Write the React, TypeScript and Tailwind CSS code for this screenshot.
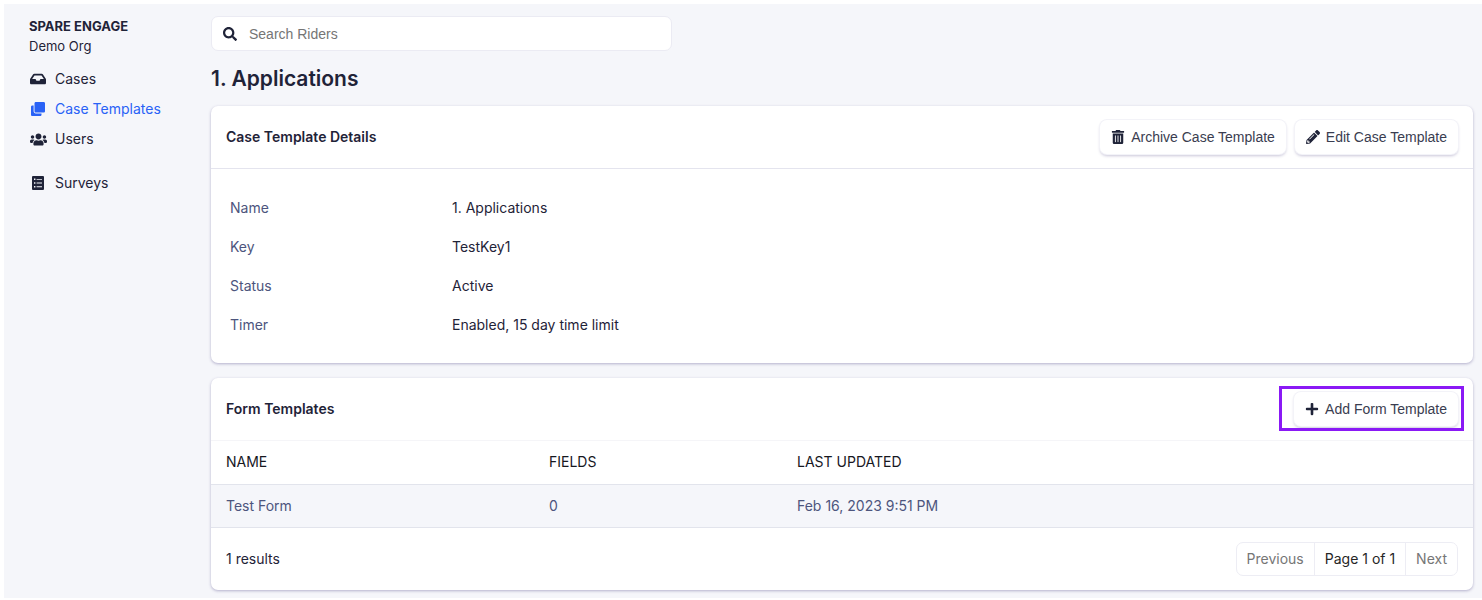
import type { ReactNode } from "react";
import {
  FaClone,
  FaInbox,
  FaPencilAlt,
  FaPlus,
  FaSearch,
  FaTrashAlt,
  FaUsers,
} from "react-icons/fa";

function SurveyIcon() {
  return (
    <svg viewBox="0 0 12 14" className="h-[14px] w-3" fill="currentColor" aria-hidden="true">
      <path
        fillRule="evenodd"
        d="M1 0h10a1 1 0 0 1 1 1v12a1 1 0 0 1-1 1H1a1 1 0 0 1-1-1V1a1 1 0 0 1 1-1ZM2 2.6v1.4h1.4V2.6ZM4.6 2.9v.9h5.4v-.9ZM2 6.3v1.4h1.4V6.3ZM4.6 6.6v.9h5.4v-.9ZM2 10v1.4h1.4V10ZM4.6 10.3v.9h5.4v-.9Z"
      />
    </svg>
  );
}

function NavItem({ icon, label, active = false }: { icon: ReactNode; label: string; active?: boolean }) {
  return (
    <li>
      <a
        href="#"
        aria-current={active ? "page" : undefined}
        className={
          active
            ? "flex h-[30px] items-center gap-2 text-[#2962f6]"
            : "flex h-[30px] items-center gap-2 text-[#1f2338]"
        }
      >
        <span className="flex w-[18px] justify-center">{icon}</span>
        {label}
      </a>
    </li>
  );
}

function ActionButton({ icon, children }: { icon: ReactNode; children: ReactNode }) {
  return (
    <button
      type="button"
      className="flex h-[34px] items-center gap-[6px] rounded-[7px] bg-white px-[11px] font-['Liberation_Sans',sans-serif] text-[14px] text-[#3a3d50] shadow-[0_0_0_1px_#f3f3f8,0_2px_3px_rgba(60,50,120,0.28)]"
    >
      <span className="flex w-[14px] justify-center text-[#1f2338]">{icon}</span>
      {children}
    </button>
  );
}

function Card({ title, actions, divider, children }: { title: string; actions: ReactNode; divider: string; children: ReactNode }) {
  return (
    <section className="overflow-hidden rounded-[7px] bg-white shadow-[0_1px_3px_rgba(70,60,130,0.38)]">
      <header className={`flex h-[63px] items-center justify-between border-b px-[15px] ${divider}`}>
        <h2 className="font-semibold">{title}</h2>
        <div className="flex gap-[9px]">{actions}</div>
      </header>
      {children}
    </section>
  );
}

const details = [
  ["Name", "1. Applications"],
  ["Key", "TestKey1"],
  ["Status", "Active"],
  ["Timer", "Enabled, 15 day time limit"],
];

export default function App() {
  return (
    <div className="min-h-screen bg-white pt-1 pl-1 pb-[2px] font-['Inter',sans-serif] text-[14px] leading-5 text-[#1f2338]">
      <div className="flex min-h-[calc(100vh-6px)] bg-[#f5f6fa] pr-[9px]">
        <aside className="w-[207px] shrink-0 pt-3 pl-[25px]">
          <div className="text-[13px] font-bold">SPARE ENGAGE</div>
          <div className="text-[13px]">Demo Org</div>
          <nav className="pt-2">
            <ul>
              <NavItem icon={<FaInbox size={16} />} label="Cases" />
              <NavItem icon={<FaClone size={14} />} label="Case Templates" active />
              <NavItem icon={<FaUsers size={17} />} label="Users" />
            </ul>
            <ul className="pt-[14px]">
              <NavItem icon={<SurveyIcon />} label="Surveys" />
            </ul>
          </nav>
        </aside>

        <main className="min-w-0 flex-1 pt-3">
          <div className="flex h-[35px] w-full max-w-[461px] items-center gap-3 rounded-[7px] border border-[#ebebf3] bg-white px-[11px]">
            <label htmlFor="rider-search" aria-label="Search Riders">
              <FaSearch size={14} aria-hidden="true" />
            </label>
            <input
              id="rider-search"
              type="search"
              placeholder="Search Riders"
              className="min-w-0 flex-1 bg-transparent font-['Liberation_Sans',sans-serif] text-[14px] outline-none placeholder:text-[#757575]"
            />
          </div>

          <h1 className="pt-[14px] pb-[13px] text-[21px] leading-7 font-semibold">1. Applications</h1>

          <div className="flex flex-col gap-[15px]">
            <Card
              title="Case Template Details"
              divider="border-[#e4e4ee]"
              actions={
                <>
                  <ActionButton icon={<FaTrashAlt size={14} />}>Archive Case Template</ActionButton>
                  <ActionButton icon={<FaPencilAlt size={14} />}>Edit Case Template</ActionButton>
                </>
              }
            >
              <dl className="py-[19px] pl-[19px]">
                {details.map(([term, value]) => (
                  <div key={term} className="flex h-[39px] items-center">
                    <dt className="w-[222px] text-[#4d557d]">{term}</dt>
                    <dd>{value}</dd>
                  </div>
                ))}
              </dl>
            </Card>

            <Card
              title="Form Templates"
              divider="border-[#f5f5f8]"
              actions={
                <div className="relative">
                  <ActionButton icon={<FaPlus size={14} />}>Add Form Template</ActionButton>
                  <div className="pointer-events-none absolute -top-[6px] -right-[6px] -bottom-[5px] -left-[15px] border-3 border-[#8a19f5]" />
                </div>
              }
            >
              <table className="w-full table-fixed text-left">
                <thead>
                  <tr className="h-[43px] border-b border-[#e2e4ec] text-[#17181f]">
                    <th className="w-[323px] pl-[15px] font-normal">NAME</th>
                    <th className="w-[248px] pl-[15px] font-normal">FIELDS</th>
                    <th className="pl-[15px] font-normal">LAST UPDATED</th>
                  </tr>
                </thead>
                <tbody>
                  <tr className="h-[43px] border-b border-[#e2e4ec] bg-[#f5f6fa] text-[#4d557d]">
                    <td className="pl-[15px]">Test Form</td>
                    <td className="pl-[15px]">0</td>
                    <td className="pl-[15px]">Feb 16, 2023 9:51 PM</td>
                  </tr>
                </tbody>
              </table>
              <footer className="flex h-[62px] items-center justify-between px-[15px]">
                <span>1 results</span>
                <div className="flex h-[34px] items-stretch divide-x divide-[#ededf4] rounded-[7px] border border-[#ededf4]">
                  <button type="button" disabled className="px-[10px] text-[#767676]">
                    Previous
                  </button>
                  <span className="flex items-center px-[10px] text-[#262626]">Page 1 of 1</span>
                  <button type="button" disabled className="px-[10px] text-[#767676]">
                    Next
                  </button>
                </div>
              </footer>
            </Card>
          </div>
        </main>
      </div>
    </div>
  );
}
